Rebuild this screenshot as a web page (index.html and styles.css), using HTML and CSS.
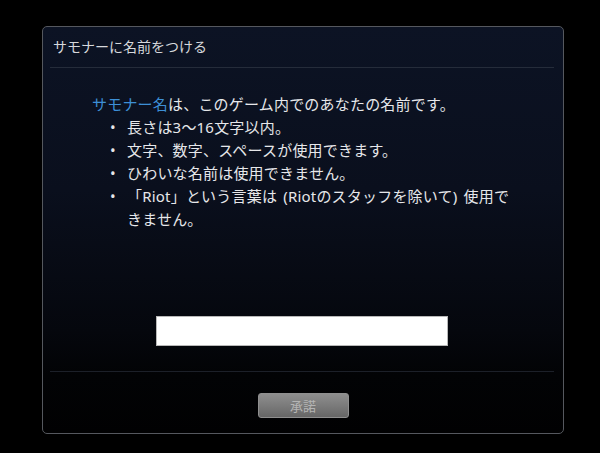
FILE: index.html
```html
<!DOCTYPE html>
<html lang="ja">
<head>
<meta charset="utf-8">
<title>サモナーに名前をつける</title>
<link rel="stylesheet" href="styles.css">
</head>
<body>
<div class="panel">
  <div class="header">サモナーに名前をつける</div>
  <div class="body">
    <p class="intro"><span class="hl">サモナー名</span>は、このゲーム内でのあなたの名前です。</p>
    <ul class="rules">
      <li>長さは3～16文字以内。</li>
      <li>文字、数字、スペースが使用できます。</li>
      <li>ひわいな名前は使用できません。</li>
      <li>「Riot」という言葉は (Riotのスタッフを除いて) 使用できません。</li>
    </ul>
  </div>
  <div class="field">
    <input class="name-input" type="text">
  </div>
  <div class="footer">
    <button class="btn" disabled>承諾</button>
  </div>
</div>
</body>
</html>
```

FILE: styles.css
```css
html, body {
  margin: 0;
  padding: 0;
  background: #000;
}
body {
  font-family: "Noto Sans", "Noto Sans CJK JP", sans-serif;
  width: 600px;
  height: 453px;
  overflow: hidden;
}
.panel {
  box-sizing: border-box;
  margin: 26px 0 0 42px;
  width: 522px;
  height: 408px;
  border: 1px solid #55585e;
  border-radius: 5px;
  background: linear-gradient(to bottom, #0c1324 0%, #0a0f1d 40%, #05070d 75%, #020305 86%, #010102 100%);
  display: flex;
  flex-direction: column;
}
.header {
  height: 40px;
  margin: 0 9px 0 7px;
  padding-left: 3px;
  border-bottom: 1px solid #252c3a;
  color: #d6d8dc;
  font-size: 14px;
  line-height: 39px;
}
.body {
  flex: 1;
  padding: 25px 0 0 49px;
  color: #e6e7ea;
  font-size: 15px;
  line-height: 23px;
  letter-spacing: 0.2px;
  word-spacing: 2px;
}
.intro {
  margin: 0;
}
.hl {
  color: #3d8fd6;
}
.rules {
  margin: 0;
  padding: 0 0 0 35px;
  width: 388px;
  list-style: none;
}
.rules li {
  position: relative;
}
.rules li::before {
  content: "•";
  position: absolute;
  left: -17px;
  top: 0;
}
.field {
  display: flex;
  justify-content: center;
  padding-bottom: 25px;
  margin: 0 9px 0 7px;
  border-bottom: 1px solid #1c2029;
}
.name-input {
  box-sizing: border-box;
  width: 292px;
  height: 30px;
  margin: 0;
  border: 1px solid #b8b8b8;
  background: #fff;
  outline: none;
}
.footer {
  height: 61px;
  display: flex;
  justify-content: center;
  padding-top: 21px;
  box-sizing: border-box;
}
.btn {
  box-sizing: border-box;
  width: 91px;
  height: 25px;
  border: 1px solid #8f8f8f;
  border-radius: 3px;
  background: linear-gradient(to bottom, #8e8e8e 0%, #7b7b7b 50%, #666 100%);
  color: #b4b4b4;
  font-family: "Noto Sans CJK JP", sans-serif;
  font-size: 13px;
  line-height: 22px;
  padding: 0;
}
```
